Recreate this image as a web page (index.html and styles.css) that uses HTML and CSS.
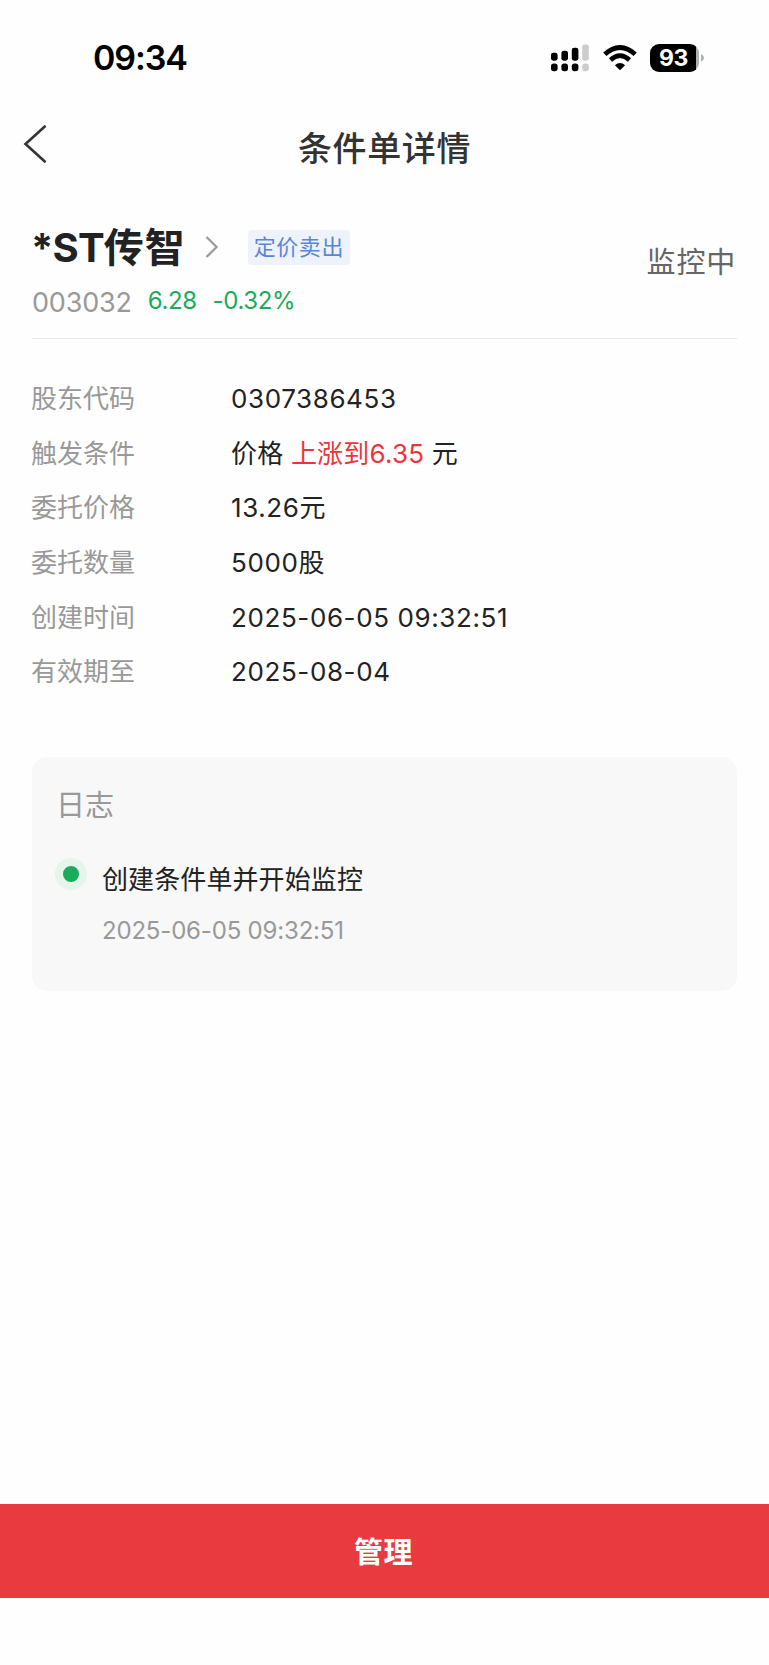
FILE: index.html
```html
<!DOCTYPE html>
<html lang="zh-CN">
<head>
  <meta charset="UTF-8" />
  <meta name="viewport" content="width=device-width, initial-scale=1.0"/>
  <title>条件单详情</title>
  <link rel="stylesheet" href="styles.css">
</head>
<body>

  <!-- Status bar -->
  <div class="status-bar">
    <div class="time">09:34</div>
    <div class="status-icons">
      <svg class="signal" width="38" height="28" viewBox="0 0 38 28">
        <rect x="0" y="8.7" width="6.6" height="8" rx="2.4"/>
        <rect x="10.4" y="6.7" width="6.6" height="10" rx="2.4"/>
        <rect x="20.8" y="3.7" width="6.6" height="13" rx="2.4"/>
        <rect class="off" x="31.2" y="0.4" width="6.6" height="16.3" rx="2.4"/>
        <rect x="0" y="19.5" width="6.6" height="7.8" rx="2.8"/>
        <rect x="10.4" y="19.5" width="6.6" height="7.8" rx="2.8"/>
        <rect x="20.8" y="19.5" width="6.6" height="7.8" rx="2.8"/>
        <rect class="off" x="31.2" y="19.5" width="6.6" height="7.8" rx="2.8"/>
      </svg>
      <svg class="wifi" width="34" height="26" viewBox="0 0 34 26">
        <path d="M1.8 9.3 Q17 -4.3 32.2 9.3" stroke-width="4.8"/>
        <path d="M7.5 15 Q17 6.3 26.5 15" stroke-width="4.6"/>
        <path class="fill" d="M17 25.3 L11.9 20.2 Q17 15.6 22.1 20.2 Z"/>
      </svg>
      <div class="battery">
        <div class="battery-level">93</div>
        <svg width="4" height="8" viewBox="0 0 4 8"><path d="M0 0 Q3 1.5 3 4 Q3 6.5 0 8 Z" fill="#b0b0b0"/></svg>
      </div>
    </div>
  </div>

  <!-- Header -->
  <div class="navbar">
    <a class="back" href="#">
      <svg width="24" height="40" viewBox="0 0 24 40"><path d="M21.8 2.5 L2.5 20 L21.8 37.5"/></svg>
    </a>
    <h1>条件单详情</h1>
  </div>

  <!-- Stock -->
  <div class="stock">
    <div class="stock-info">
      <div class="stock-title">
        <span class="stock-name"><span class="prefix">*ST</span>传智</span>
        <svg class="arrow" width="14" height="24" viewBox="0 0 14 24"><path d="M1.5 2 L11.6 12 L1.5 22"/></svg>
        <span class="tag">定价卖出</span>
      </div>
      <div class="stock-quote">
        <span class="code">003032</span>
        <span class="price">6.28</span>
        <span class="change">-0.32%</span>
      </div>
    </div>
    <div class="stock-status">监控中</div>
  </div>

  <!-- Detail -->
  <dl class="detail">
    <dt>股东代码</dt><dd>0307386453</dd>
    <dt>触发条件</dt><dd class="condition">价格 <span class="red">上涨到6.35</span> 元</dd>
    <dt>委托价格</dt><dd>13.26元</dd>
    <dt>委托数量</dt><dd>5000股</dd>
    <dt>创建时间</dt><dd>2025-06-05 09:32:51</dd>
    <dt>有效期至</dt><dd>2025-08-04</dd>
  </dl>

  <!-- Log -->
  <div class="log">
    <h2>日志</h2>
    <div class="log-item">
      <span class="dot"></span>
      <div class="log-text">
        <p class="log-title">创建条件单并开始监控</p>
        <p class="log-time">2025-06-05 09:32:51</p>
      </div>
    </div>
  </div>

  <button class="manage-btn">管理</button>

</body>
</html>
```
FILE: styles.css
```css
* {
  box-sizing: border-box;
  margin: 0;
  padding: 0;
  font-family: Inter, 'Noto Sans CJK SC', sans-serif;
}
body {
  display: flex;
  flex-direction: column;
  height: 1665px;
  padding-bottom: 67px;
  background-color: #fefefe;
  color: #222;
}

/* status bar */
.status-bar {
  display: flex;
  justify-content: space-between;
  align-items: center;
  height: 115px;
  padding: 0 64px 0 93px;
  color: #000;
}
.time {
  font-size: 34px;
  font-weight: 600;
  line-height: 40px;
  letter-spacing: -1.1px;
}
.status-icons {
  display: flex;
  align-items: center;
}
.signal .off {
  fill: #ccc;
}
.wifi {
  margin-left: 14px;
  fill: none;
  stroke: #000;
}
.wifi .fill {
  fill: #000;
  stroke: none;
}
.battery {
  display: flex;
  align-items: center;
  gap: 2px;
  margin-left: 13px;
}
.battery-level {
  width: 49px;
  height: 28px;
  border-radius: 9px;
  background: linear-gradient(to right, #000 46px, #b0b0b0 46px);
  color: #fff;
  font-size: 23px;
  font-weight: 700;
  line-height: 28px;
  text-align: center;
  letter-spacing: -0.5px;
  padding-right: 2px;
}

/* header */
.navbar {
  display: flex;
  align-items: center;
  height: 66px;
  padding: 0 23px;
}
.back {
  width: 24px;
  height: 48px;
}
.back svg {
  display: block;
  fill: none;
  stroke: #333;
  stroke-width: 2.6;
  stroke-linecap: round;
}
.navbar h1 {
  flex: 1;
  padding: 0 24px 3px 0;
  color: #333;
  font-size: 34px;
  font-weight: 500;
  letter-spacing: 0.6px;
  text-align: center;
}

/* stock */
.stock {
  display: flex;
  justify-content: space-between;
  height: 158px;
  margin: 0 32px;
  padding-top: 39px;
  border-bottom: 1px solid #e8e8e8;
}
.stock-title {
  display: flex;
  align-items: center;
  height: 54px;
}
.stock-name {
  padding-bottom: 4px;
  font-size: 40px;
  font-weight: 700;
  letter-spacing: 0.9px;
}
.stock-name .prefix {
  margin-left: -1px;
  letter-spacing: -0.8px;
}
.arrow {
  margin: 0 29px 0 19px;
  fill: none;
  stroke: #999;
  stroke-width: 2.2;
}
.tag {
  height: 35px;
  padding: 0 6px;
  border-radius: 4px;
  background-color: #eef2fb;
  color: #5a86d9;
  font-size: 22px;
  line-height: 35px;
  letter-spacing: 0.6px;
}
.stock-quote {
  display: flex;
  height: 54px;
  line-height: 54px;
}
.code {
  color: #999;
  font-size: 27px;
  line-height: 58px;
  letter-spacing: -0.2px;
}
.price, .change {
  margin-left: 16px;
  color: #1aab5b;
  font-size: 24px;
  letter-spacing: -0.4px;
}
.stock-status {
  padding: 23px 1px 0 0;
  color: #666;
  font-size: 29px;
  line-height: 40px;
  letter-spacing: 0.8px;
}

/* detail */
.detail {
  display: grid;
  grid-template-columns: 200px 1fr;
  grid-auto-rows: 54.7px;
  margin: 33px 32px 0 31px;
  font-size: 26px;
  line-height: 54px;
}
.detail dt {
  color: #999;
}
.detail dd {
  line-height: 53px;
  letter-spacing: 0.6px;
}
.detail .condition {
  letter-spacing: 0.2px;
}
.detail .red {
  color: #ee343b;
}

/* log */
.log {
  height: 234px;
  margin: 57px 32px 0;
  padding: 29px 23px;
  border-radius: 15px;
  background-color: #f8f8f8;
}
.log h2 {
  padding-left: 1px;
  color: #999;
  font-size: 29px;
  font-weight: 400;
  line-height: 40px;
}
.log-item {
  display: flex;
  gap: 15px;
  margin-top: 28px;
}
.dot {
  width: 32px;
  height: 32px;
  margin-top: 4px;
  border: 8px solid #e6f5e9;
  border-radius: 50%;
  background-color: #1aab5b;
}
.log-title {
  font-size: 26px;
  line-height: 52px;
  letter-spacing: 0.1px;
}
.log-time {
  color: #999;
  font-size: 24px;
  line-height: 50px;
  letter-spacing: -0.18px;
}

.manage-btn {
  height: 94px;
  margin-top: auto;
  padding: 0 2px 2px 0;
  border: none;
  background-color: #e93b3f;
  color: #fff;
  font-size: 29px;
  font-weight: 700;
  letter-spacing: 0.5px;
  cursor: pointer;
}
```
